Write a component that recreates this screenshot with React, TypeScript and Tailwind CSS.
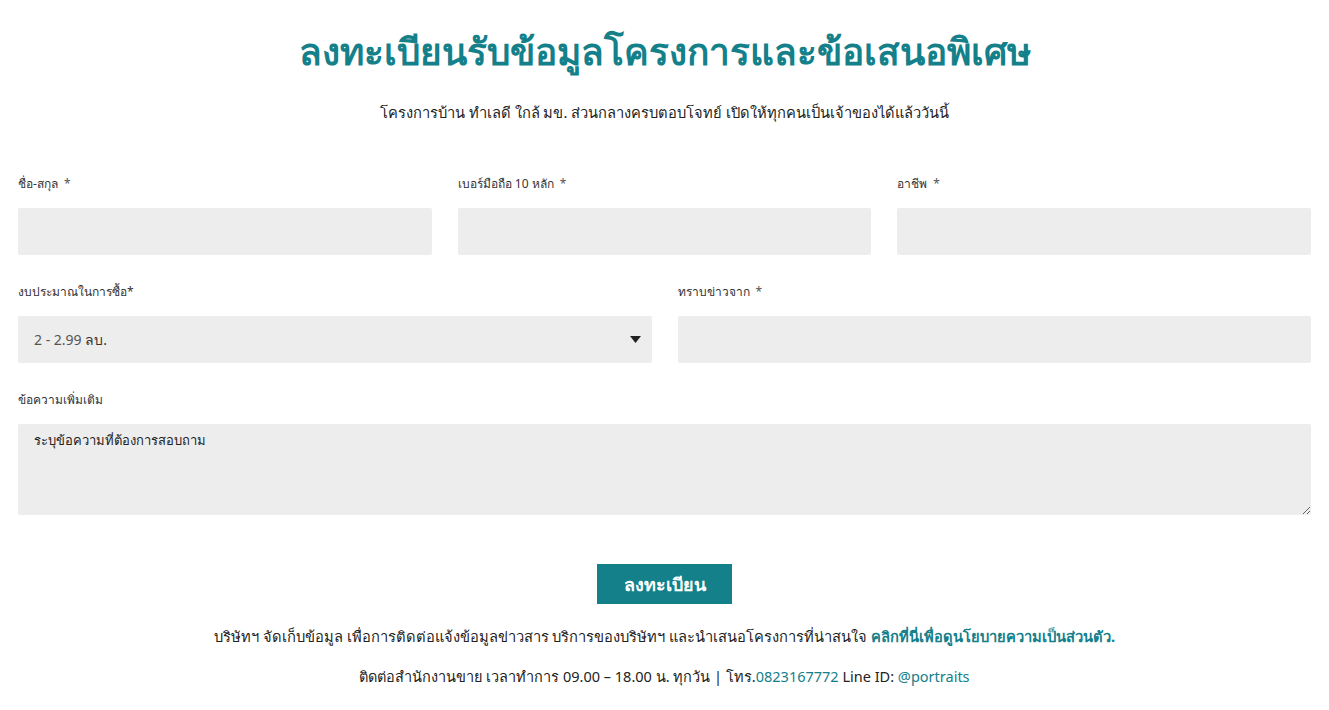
const teal = "text-[#13808a]";

function Field({ label, className = "" }: { label: string; className?: string }) {
  return (
    <label className={`flex flex-col ${className}`}>
      <span className="h-[17px] text-[12px] leading-[17px] text-[#333]">
        {label}
        <span className="ml-[6px] text-[#555]">*</span>
      </span>
      <input className="mt-[16px] h-[47px] w-full rounded-[2px] bg-[#ededed] px-4 outline-none" />
    </label>
  );
}

export default function App() {
  return (
    <div className="min-h-[710px] bg-white font-['Noto_Sans',sans-serif] text-[#222]">
      <div className="px-[18px] pt-[25px]">
        <h1 className={`text-center text-[37px] font-bold leading-[52px] ${teal}`}>
          ลงทะเบียนรับข้อมูลโครงการและข้อเสนอพิเศษ
        </h1>
        <p className="mt-[24px] text-center text-[14.7px] leading-[22px] text-[#222]">
          โครงการบ้าน ทำเลดี ใกล้ มข. ส่วนกลางครบตอบโจทย์ เปิดให้ทุกคนเป็นเจ้าของได้แล้ววันนี้
        </p>

        <div className="mt-[52px] grid grid-cols-3 gap-x-[26px]">
          <Field label="ชื่อ-สกุล" />
          <Field label="เบอร์มือถือ 10 หลัก" />
          <Field label="อาชีพ" />
        </div>

        <div className="mt-[28px] grid grid-cols-2 gap-x-[26px]">
          <label className="flex flex-col">
            <span className="h-[17px] text-[12px] leading-[17px] text-[#333]">งบประมาณในการซื้อ*</span>
            <div className="relative mt-[16px] flex h-[47px] items-center rounded-[2px] bg-[#ededed] px-4 text-[14px] text-[#555]">
              <span>
                2 - 2.99 <span className="text-[#333]">ลบ.</span>
              </span>
              <svg className="absolute right-[11px] top-[20px]" width="11" height="7" viewBox="0 0 11 7">
                <path d="M0 0h11L5.5 7z" fill="#222" />
              </svg>
            </div>
          </label>
          <Field label="ทราบข่าวจาก" />
        </div>

        <label className="mt-[28px] flex flex-col">
          <span className="h-[17px] text-[12px] leading-[17px] text-[#333]">ข้อความเพิ่มเติม</span>
          <textarea
            placeholder="ระบุข้อความที่ต้องการสอบถาม"
            className="mt-[16px] h-[91px] w-full rounded-[2px] bg-[#ededed] px-4 py-[7px] text-[13px] text-[#222] outline-none placeholder:text-[#222]"
          />
        </label>

        <div className="mt-[49px] flex justify-center">
          <button className="h-[40px] w-[135px] bg-[#13808a] text-[18px] font-semibold text-white">ลงทะเบียน</button>
        </div>

        <p className="mt-[21px] text-center text-[14.7px] leading-[22px] text-[#222]">
          บริษัทฯ จัดเก็บข้อมูล เพื่อการติดต่อแจ้งข้อมูลข่าวสาร บริการของบริษัทฯ และนำเสนอโครงการที่น่าสนใจ{" "}
          <a className={`font-bold ${teal}`}>คลิกที่นี่เพื่อดูนโยบายความเป็นส่วนตัว.</a>
        </p>
        <p className="mt-[18px] text-center text-[14.5px] leading-[22px] text-[#222]">
          ติดต่อสำนักงานขาย เวลาทำการ 09.00 – 18.00 น. ทุกวัน | โทร.<span className={teal}>0823167772</span> Line ID:{" "}
          <span className={teal}>@portraits</span>
        </p>
      </div>
    </div>
  );
}
